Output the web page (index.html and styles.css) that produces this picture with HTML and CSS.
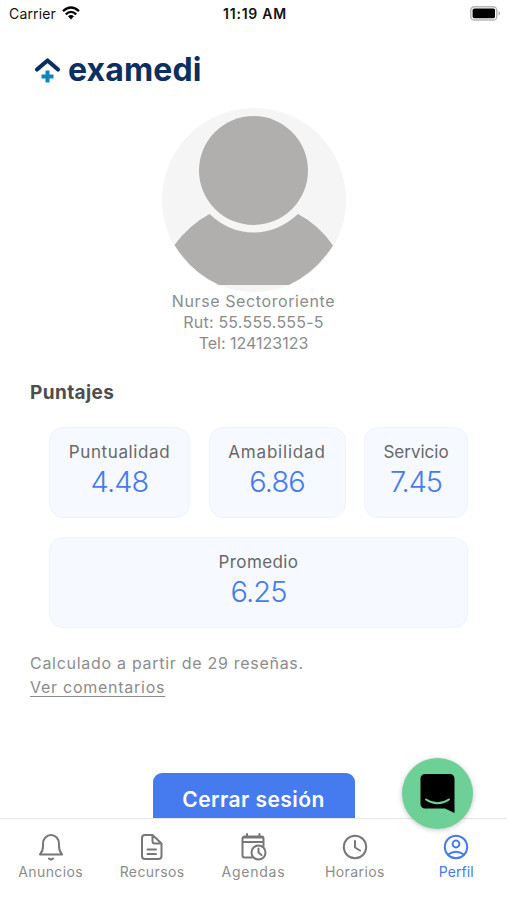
FILE: index.html
```html
<!DOCTYPE html>
<html lang="es">
<head>
<meta charset="utf-8">
<title>Examedi – Perfil</title>
<link rel="stylesheet" href="styles.css">
</head>
<body>
<div class="screen">
  <header class="status">
    <div class="carrier"><span>Carrier</span>
      <svg width="18" height="14" viewBox="0 0 18 14" fill="none" stroke="#000" stroke-width="2.3"><path d="M1 5.2Q9-2.2 17 5.2M3.8 8.3Q9 3.4 14.2 8.3"/><path d="M6 10.2Q9 7.6 12 10.2L9 13.4z" fill="#000" stroke="none"/></svg>
    </div>
    <span class="time">11:19 AM</span>
    <svg class="battery" width="31" height="15" viewBox="0 0 31 15"><rect x=".8" y=".8" width="26" height="13.2" rx="3.6" fill="#fff" stroke="#b5b5b5" stroke-width="1.5"/><rect x="2.6" y="2.6" width="22.4" height="9.6" rx="1.6"/><path d="M28.6 5q3 2.4 0 4.8z" fill="#aaa"/></svg>
  </header>

  <main class="content">
    <div class="logo">
      <svg width="27" height="27" viewBox="0 0 27 27" fill="none"><path d="M3 12.500 13.500 3.500 24 12.500" stroke="#0b2f5e" stroke-width="4.200" stroke-linecap="round" stroke-linejoin="round"/><path d="M13.500 13.500v12M7.500 19.500h12" stroke="#1383bd" stroke-width="4"/></svg>
      <span class="logo-name">examedi</span>
    </div>

    <section class="profile">
      <svg class="avatar" width="184" height="184" viewBox="0 0 184 184"><circle cx="92" cy="92" r="92" fill="#f5f5f5"/><circle cx="91.5" cy="62.5" r="54.5" fill="#b0afae"/><path d="M47.500 106Q67 124.500 91.500 124.500T136 106Q157 117 171 137.500Q154 164 127 177H57Q29 164 12.500 137Q27 117 47.500 106z" fill="#b0afae"/></svg>
      <p class="name">Nurse Sectororiente</p>
      <p class="rut">Rut: 55.555.555-5</p>
      <p class="tel">Tel: 124123123</p>
    </section>

    <h2 class="title">Puntajes</h2>
    <section class="scores">
      <div class="card"><span class="label punctual">Puntualidad</span><span class="value">4.48</span></div>
      <div class="card"><span class="label kind">Amabilidad</span><span class="value">6.86</span></div>
      <div class="card"><span class="label">Servicio</span><span class="value seven">7.45</span></div>
      <div class="card wide"><span class="label average">Promedio</span><span class="value">6.25</span></div>
    </section>

    <p class="note">Calculado a partir de 29 reseñas.</p>
    <a class="comments">Ver comentarios</a>
    <button class="logout">Cerrar sesión</button>
  </main>

  <nav class="tabs">
    <a class="tab"><svg width="28" height="30" viewBox="0 0 28 30"><path d="M3 22.500Q6 19 6 14V11.500a8 8.500 0 0 1 16 0V14Q22 19 25 22.500z"/><path d="M12 26.500q2 1.800 4 0"/></svg><span>Anuncios</span></a>
    <a class="tab"><svg width="28" height="30" viewBox="0 0 28 30"><path d="M14.500 3H7a3 3 0 0 0-3 3v18a3 3 0 0 0 3 3h13.500a3 3 0 0 0 3-3V11.500zV9a2.500 2.500 0 0 0 2.500 2.500h6.500M9.500 17.500H18M9.500 22H18"/></svg><span>Recursos</span></a>
    <a class="tab agenda"><svg width="28" height="30" viewBox="0 0 28 30"><path d="M13 25.500H5.500a2 2 0 0 1-2-2V6.500a2 2 0 0 1 2-2h17a2 2 0 0 1 2 2V14M3.500 10h21M8 2v3M20.500 2v3"/><path d="M4 5.500h20"/><circle cx="19.500" cy="20.500" r="7" fill="#fff"/><path d="M19.500 16.500V20.500l3 2.500"/></svg><span>Agendas</span></a>
    <a class="tab"><svg width="28" height="30" viewBox="0 0 28 30"><circle cx="14" cy="15" r="11.200"/><path d="M14 9V15.500l5 3"/></svg><span>Horarios</span></a>
    <a class="tab active"><svg width="28" height="30" viewBox="0 0 28 30"><circle cx="14" cy="15" r="11.200"/><circle cx="14" cy="12" r="3.400"/><path d="M6 22.500Q14 17 22 22.500"/></svg><span>Perfil</span></a>
  </nav>

  <div class="chat"><svg width="36" height="40" viewBox="0 0 36 40"><path d="M5 0h25a4.500 4.500 0 0 1 4.500 4.500V39L25 34.500H5A4.500 4.500 0 0 1 .500 30V4.500A4.500 4.500 0 0 1 5 0z"/><path d="M6 25.500q11.500 7.500 23 0" fill="none" stroke="#6dd197" stroke-width="2" stroke-linecap="round"/></svg></div>
</div>
</body>
</html>
```
FILE: styles.css
```css
* { box-sizing: border-box; }
body { margin: 0; background: #fff; font-family: Inter, sans-serif; color: #8c8c8c; }
p, h2 { margin: 0; }
.screen { position: relative; width: 507px; height: 900px; overflow: hidden; display: flex; flex-direction: column; background: #fff; }
.status { height: 28px; flex: none; display: grid; grid-template-columns: 1fr auto 1fr; align-items: center; padding: 0 6px 2px 9px; color: #111; font-size: 14px; }
.carrier { display: flex; align-items: center; gap: 6px; letter-spacing: .15px; }
.time { font-weight: 600; letter-spacing: .75px; }
.battery { justify-self: end; }
.content { flex: 1; min-height: 0; overflow: hidden; padding: 0 30px; display: flex; flex-direction: column; }
.logo { display: flex; flex: none; align-items: center; gap: 7px; height: 44px; margin: 20px 0 0 4px; }
.logo-name { font-size: 32px; font-weight: 650; color: #0b2f5e; line-height: 40px; letter-spacing: .15px; }
.profile { flex: none; display: flex; flex-direction: column; align-items: center; margin-top: 16px; font-size: 16px; line-height: 21px; }
.avatar { display: block; margin-bottom: -1px; }
.name { letter-spacing: .6px; }
.rut { letter-spacing: .2px; }
.title { flex: none; font-size: 19px; line-height: 24px; margin-top: 27px; color: #4d4d4d; letter-spacing: .4px; }
.scores { flex: none; display: grid; grid-template-columns: 141px 137px 104px; gap: 19px 18.5px; margin: 22px 0 0 19px; }
.card { height: 91px; border: 1px solid #eef3fd; border-radius: 14px; background: #f6f9ff; display: flex; flex-direction: column; align-items: center; padding-top: 12px; }
.wide { grid-column: 1 / -1; }
.label { font-size: 17px; line-height: 24px; color: #686868; }
.punctual { letter-spacing: .6px; }
.kind { letter-spacing: .8px; }
.average { letter-spacing: .4px; }
.value { font-size: 29px; line-height: 36px; font-weight: 300; letter-spacing: -.9px; color: #457bee; }
.seven { letter-spacing: -1.1px; }
.note { margin-top: 23px; font-size: 16px; line-height: 24px; flex: none; letter-spacing: .71px; }
.comments { align-self: flex-start; font-size: 16px; line-height: 25px; letter-spacing: .74px; text-decoration: underline; text-underline-offset: 3px; text-decoration-thickness: 1px; flex: none; }
.logout { flex: none; align-self: center; width: 202px; height: 54px; margin-top: 73px; border: 0; border-radius: 9px; background: #457bee; color: #fff; font: 600 21px/54px Inter, sans-serif; letter-spacing: .42px; padding: 0; }
.tabs { flex: none; height: 82px; border-top: 1px solid #e6e6e6; background: #fff; display: grid; grid-template-columns: repeat(5, 1fr); padding-top: 13px; }
.tab { display: flex; flex-direction: column; align-items: center; font-size: 14px; line-height: 20px; letter-spacing: .4px; }
.tab svg { fill: none; stroke: #777; stroke-width: 2; stroke-linejoin: round; stroke-linecap: round; }
.agenda { letter-spacing: .75px; }
.tab.active { color: #457bee; letter-spacing: .1px; }
.tab.active svg { stroke: #457bee; }
.chat { position: absolute; left: 402px; top: 758px; width: 71px; height: 71px; border-radius: 50%; background: #6dd197; box-shadow: 0 1px 5px rgba(0,0,0,.25); display: flex; align-items: center; justify-content: center; }
```
